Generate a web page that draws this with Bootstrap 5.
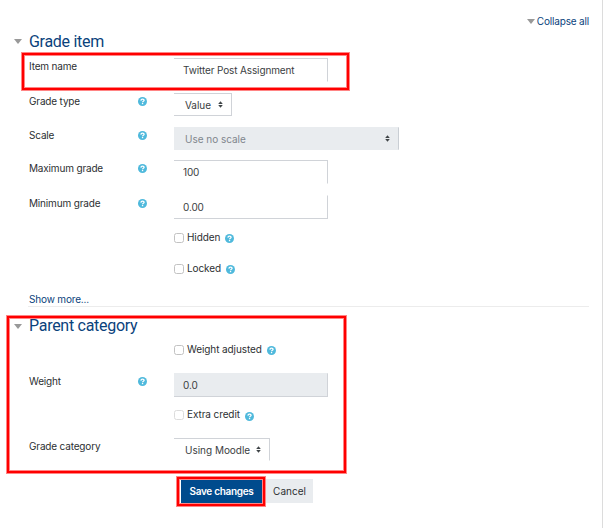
<!DOCTYPE html>
<html lang="en">
<head>
<meta charset="utf-8">
<meta name="viewport" content="width=device-width, initial-scale=1">
<title>Edit grade item</title>
<link href="https://cdn.jsdelivr.net/npm/bootstrap@5.3.0/dist/css/bootstrap.min.css" rel="stylesheet">
<style>
body{font-family:Inter,"Liberation Sans",sans-serif;font-size:10px;line-height:16px;color:#2c2f32;background:#fff;letter-spacing:-.17px}
.page-pane{width:603px;height:528px;border-right:1px solid #dcdcdc;padding:13px 13px 0 29px;overflow:hidden}
a,.section-title{color:#0a427c;text-decoration:none}
.section-title{font-family:Roboto,"Liberation Sans",sans-serif;font-size:16px;font-weight:400;line-height:20px;letter-spacing:-.28px;margin:0 0 0 -15px}
.caret{width:0;height:0;border:4px solid transparent;border-top:5px solid #999;border-bottom:0;flex:none}
.section-title .caret{margin-right:7px}
.collapse-line .caret{margin-right:2px}
.form-line{display:grid;grid-template-columns:109px 36px auto;justify-content:start;align-items:start}
.h33{height:33px}.h34{height:34px}.h35{height:35px}
.help{width:9px;height:9px;display:block;flex:none}
.form-line>.help{margin-top:4px}
.form-control,.picker{font-size:10px;line-height:16px;border:1px solid #d0d3d8;border-left:0;border-radius:0;color:#3a3e42;letter-spacing:-.13px}
.form-control{width:154px;height:24px;min-height:0;padding:3px 9px}
.form-control:disabled,.picker.off{background:#e9ecef}
.form-control:disabled{border-top-color:#e9ecef;color:#3a3e42}
.picker{height:23px;display:flex;align-items:center;justify-content:space-between;padding:0 8px 0 11px;background:#fff;letter-spacing:-.02px}
.picker.off{width:225px;color:#80868d;border-color:#e9ecef #c9ced4 #e9ecef #e9ecef}
.value-pick{width:58px}
.category-pick{width:96px}
.open-bottom{border-bottom-color:transparent}
.open-top{border-top-color:transparent}
.updown{width:5px;height:7px;flex:none}
.check-line{margin-left:145px;height:16px}
.check-line label{padding-bottom:1px;line-height:15px;letter-spacing:-.1px}
.form-check-input{width:10px;height:10px;margin:0 3px 0 0;border:1.5px solid #c2c2c2;border-radius:2.5px!important;flex:none}
.form-check-input:disabled{border-color:#dcdcdc;opacity:1}
.check-line .help{margin:1px 0 0 5px}
.extra-line .help{margin-top:3px}
.save-btn,.cancel-btn{font-size:10px;line-height:16px;height:24px;border:0;border-radius:0;padding:4px 0}
.save-btn{width:81px;background:#004b8d;color:#fff;font-weight:600;letter-spacing:-.3px}
.save-btn:hover{background:#003d73;color:#fff}
.cancel-btn{width:47px;background:#e9ecef;color:#2c2f32;margin-left:4px}
.rule{height:1px;background:#ececec;margin-left:-1px}
.grade-fields{padding-top:7px}
#grade-title{margin-top:3px;height:19px}
.lock-line{margin-top:15px}
.more-link{margin-top:14px;height:15px}
#parent-title{margin-top:9px}
.adj-line{margin-top:6px}
.weight-line{margin-top:15px}
.cat-line{margin-top:15px;height:41px}
.actions{margin-left:152px}
.callout{position:absolute;border:2px solid red;outline:1px solid #ff8585;box-shadow:inset 0 0 0 1px #ff8585;pointer-events:none}
.callout-name{left:22px;top:53px;width:327px;height:37px}
.callout-parent{left:7px;top:316px;width:339px;height:157px}
.callout-save{left:177px;top:477px;width:88px;height:29px}
</style>
</head>
<body class="position-relative">
<svg class="d-none" xmlns="http://www.w3.org/2000/svg">
  <symbol id="q" viewBox="0 0 9 9"><circle cx="4.5" cy="4.5" r="4.5" fill="#4fb9dc"/><path d="M2.9 3.6C3 2.5 3.7 2.1 4.5 2.1c.9 0 1.6.5 1.6 1.2 0 .9-1.5 1-1.5 2" fill="none" stroke="#fff" stroke-width="1.3"/><rect x="3.9" y="5.9" width="1.3" height="1.3" fill="#fff"/></symbol>
  <symbol id="ud" viewBox="0 0 5 7"><path d="M2.5 .3 4.8 3H.2zM2.5 6.7.2 4h4.6z" fill="#3f4447"/></symbol>
</svg>
<main class="page-pane">
  <div class="collapse-line d-flex justify-content-end align-items-center"><span class="caret"></span><a href="#">Collapse all</a></div>
  <h2 class="section-title d-flex align-items-center" id="grade-title"><span class="caret"></span>Grade item</h2>
  <section class="grade-fields">
    <div class="form-line h35"><label for="name">Item name</label><span></span><input id="name" class="form-control open-bottom" value="Twitter Post Assignment"></div>
    <div class="form-line h34"><span>Grade type</span><svg class="help"><use href="#q"/></svg><div class="picker value-pick">Value<svg class="updown"><use href="#ud"/></svg></div></div>
    <div class="form-line h33"><span>Scale</span><svg class="help"><use href="#q"/></svg><div class="picker off">Use no scale<svg class="updown"><use href="#ud"/></svg></div></div>
    <div class="form-line h35"><label for="max">Maximum grade</label><svg class="help"><use href="#q"/></svg><input id="max" class="form-control open-bottom" value="100"></div>
    <div class="form-line h35"><label for="min">Minimum grade</label><svg class="help"><use href="#q"/></svg><input id="min" class="form-control open-top" value="0.00"></div>
    <div class="check-line d-flex align-items-center"><input id="hid" type="checkbox" class="form-check-input"><label for="hid">Hidden</label><svg class="help"><use href="#q"/></svg></div>
    <div class="check-line lock-line d-flex align-items-center"><input id="lock" type="checkbox" class="form-check-input"><label for="lock">Locked</label><svg class="help"><use href="#q"/></svg></div>
    <a href="#" class="more-link d-block">Show more...</a>
    <div class="rule"></div>
  </section>
  <h2 class="section-title d-flex align-items-center" id="parent-title"><span class="caret"></span>Parent category</h2>
  <section>
    <div class="check-line adj-line d-flex align-items-center"><input id="adj" type="checkbox" class="form-check-input"><label for="adj">Weight adjusted</label><svg class="help"><use href="#q"/></svg></div>
    <div class="form-line h34 weight-line"><label for="weight">Weight</label><svg class="help"><use href="#q"/></svg><input id="weight" class="form-control" value="0.0" disabled></div>
    <div class="check-line extra-line d-flex align-items-center"><input id="extra" type="checkbox" class="form-check-input" disabled><label for="extra">Extra credit</label><svg class="help"><use href="#q"/></svg></div>
    <div class="form-line cat-line"><span>Grade category</span><span></span><div class="picker category-pick open-bottom">Using Moodle<svg class="updown"><use href="#ud"/></svg></div></div>
    <div class="actions d-flex"><button class="btn save-btn">Save changes</button><button class="btn cancel-btn">Cancel</button></div>
  </section>
</main>
<div class="callout callout-name"></div>
<div class="callout callout-parent"></div>
<div class="callout callout-save"></div>
</body>
</html>
